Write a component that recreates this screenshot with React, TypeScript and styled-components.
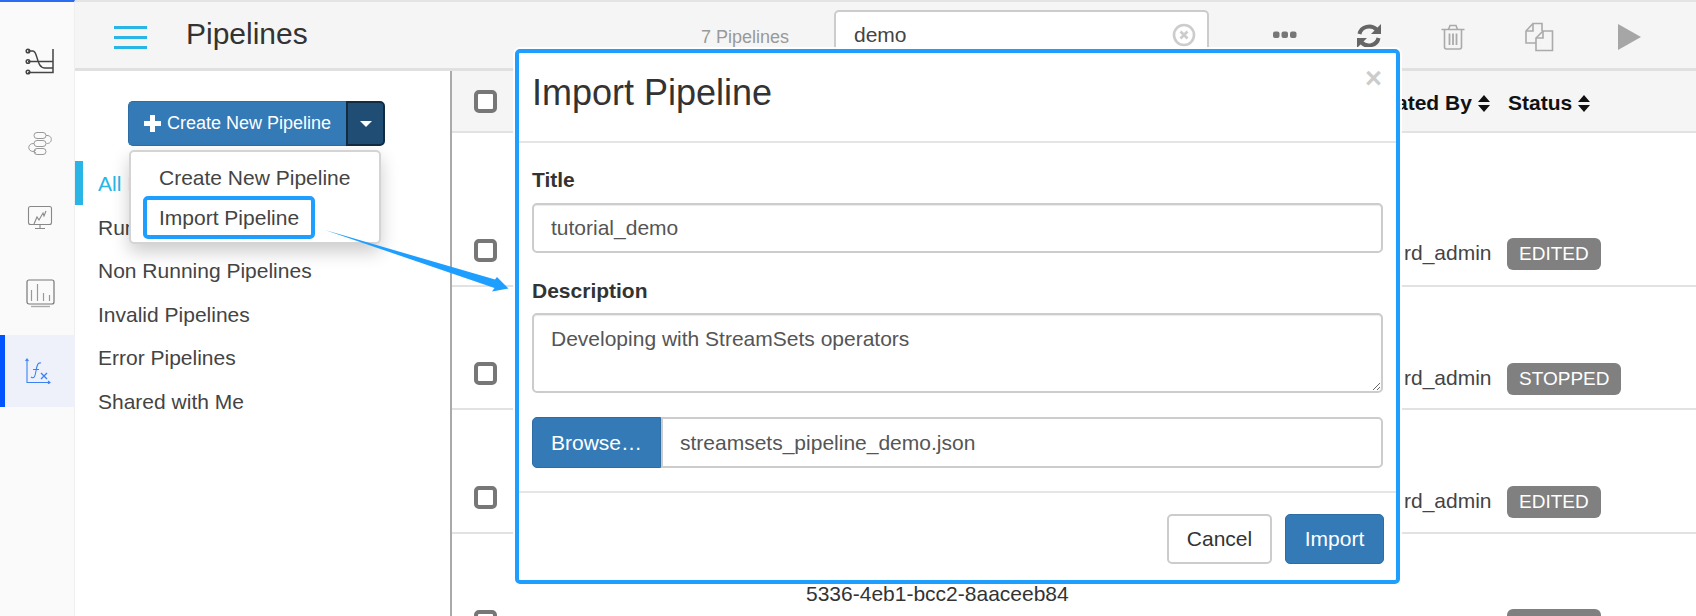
import React from 'react';
import styled, { createGlobalStyle } from 'styled-components';

const GlobalStyle = createGlobalStyle`
  html, body {
    margin: 0;
    padding: 0;
    height: 616px;
    overflow: hidden;
    background: #fff;
    font-family: "Liberation Sans", Arial, sans-serif;
    color: #333;
  }
  * { box-sizing: border-box; }
`;

const annotation = '#1e9fff';

const Page = styled.div`
  position: relative;
  width: 1696px;
  height: 616px;
  overflow: hidden;
  display: flex;
`;

const Rail = styled.nav`
  width: 75px;
  flex: none;
  background: #fafafa;
  border-top: 2px solid #2b6cf0;
  border-right: 1px solid #efefef;
  padding-top: 23px;
`;

const RailItem = styled.div<{ $top?: number; $active?: boolean }>`
  height: 72px;
  margin-top: ${({ $top }) => $top ?? 0}px;
  display: flex;
  align-items: center;
  justify-content: center;
  background: ${({ $active }) => ($active ? '#eef1f9' : 'transparent')};
  border-left: 5px solid ${({ $active }) => ($active ? '#0055ff' : 'transparent')};
  padding-right: ${({ $active }) => ($active ? 5 : 0)}px;
  margin-right: -1px;
`;

const Main = styled.div`
  flex: 1;
  min-width: 0;
  display: flex;
  flex-direction: column;
`;

const Header = styled.header`
  height: 71px;
  flex: none;
  display: flex;
  align-items: center;
  background: #f5f5f5;
  border-top: 2px solid #e4e4e4;
  border-bottom: 3px solid #e0e0e0;
  padding-left: 39px;
`;

const Burger = styled.div`
  width: 33px;
  height: 23px;
  flex: none;
  display: flex;
  flex-direction: column;
  justify-content: space-between;
  margin-top: 4px;

  span {
    display: block;
    height: 3px;
    background: #29b6e6;
  }
`;

const PageTitle = styled.h1`
  margin: 0 0 2px 39px;
  font-size: 30px;
  font-weight: 400;
  color: #333;
`;

const Count = styled.span`
  margin-left: auto;
  margin-top: 4px;
  font-size: 18px;
  color: #999;
`;

const SearchBox = styled.div`
  width: 375px;
  height: 50px;
  margin-left: 45px;
  display: flex;
  align-items: center;
  padding: 0 11px 0 18px;
  background: #fff;
  border: 2px solid #ccc;
  border-radius: 5px;
`;

const SearchInput = styled.input`
  flex: 1;
  min-width: 0;
  border: 0;
  outline: 0;
  padding: 0;
  font: 21px "Liberation Sans", Arial, sans-serif;
  color: #444;
`;

const Tools = styled.div`
  display: flex;
  align-items: center;
  margin-left: 34px;
  margin-right: 17px;
`;

const ToolSlot = styled.div<{ $width?: number; $drop?: number; $nudge?: number }>`
  width: ${({ $width }) => $width ?? 84}px;
  display: flex;
  justify-content: center;
  align-items: center;
  padding-top: ${({ $drop }) => ($drop ?? 0) * 2}px;
  padding-left: ${({ $nudge }) => ($nudge ?? 0) * 2}px;
`;

const Body = styled.div`
  flex: 1;
  min-height: 0;
  display: flex;
`;

const Sidebar = styled.aside`
  width: 377px;
  flex: none;
  border-right: 2px solid #aaa;
  padding-top: 30px;
`;

const SplitButton = styled.div`
  width: 257px;
  height: 45px;
  margin-left: 53px;
  margin-bottom: 15px;
  display: flex;
  color: #fff;
  font-size: 18px;
`;

const MainAction = styled.div`
  flex: 1;
  display: flex;
  align-items: center;
  gap: 6px;
  padding-left: 15px;
  background: #337ab7;
  border: 1px solid #2e6da4;
  border-right: 0;
  border-radius: 5px 0 0 5px;
  white-space: nowrap;
`;

const CaretAction = styled.div`
  width: 39px;
  display: flex;
  align-items: center;
  justify-content: center;
  background: #204d74;
  border: 2px solid #122b40;
  border-radius: 0 5px 5px 0;
`;

const Caret = styled.span`
  width: 0;
  height: 0;
  border-left: 6px solid transparent;
  border-right: 6px solid transparent;
  border-top: 6px solid #fff;
`;

const NavItem = styled.div<{ $active?: boolean }>`
  height: 43.5px;
  display: flex;
  align-items: center;
  padding-top: 3px;
  padding-left: ${({ $active }) => ($active ? 15 : 23)}px;
  font-size: 21px;
  color: ${({ $active }) => ($active ? '#29b6e6' : '#444')};
  border-left: ${({ $active }) => ($active ? '8px solid #29b6e6' : '0')};
`;

const Table = styled.section`
  flex: 1;
  min-width: 0;
`;

const TableHead = styled.div`
  height: 62px;
  display: flex;
  align-items: center;
  background: #f5f5f5;
  border-bottom: 2px solid #e2e2e2;
  padding-left: 22px;
`;

const HeadFill = styled.div`
  flex: 1;
`;

const HeadLabel = styled.div<{ $width: number }>`
  width: ${({ $width }) => $width}px;
  flex: none;
  display: flex;
  align-items: center;
  gap: 6px;
  margin-top: 4px;
  font-size: 21px;
  font-weight: 700;
  color: #111;
  white-space: nowrap;
`;

const TableRow = styled.div<{ $height: number }>`
  height: ${({ $height }) => $height}px;
  display: flex;
  align-items: flex-end;
  padding-left: 22px;
  border-bottom: 2px solid #e2e2e2;
`;

const Check = styled.div<{ $row?: boolean }>`
  width: 23px;
  height: 23px;
  flex: none;
  border: 4px solid #777;
  border-radius: 5px;
  background: #fff;
  margin-bottom: ${({ $row }) => ($row ? 23 : 0)}px;
`;

const NameCell = styled.div`
  flex: 1;
  min-width: 0;
  padding-left: 309px;
  margin-bottom: 50px;
  font-size: 21px;
  color: #333;
  white-space: nowrap;
`;

const OwnerCell = styled.div<{ $drop: number }>`
  width: 103px;
  flex: none;
  margin-bottom: ${({ $drop }) => 20 - $drop}px;
  font-size: 21px;
  color: #444;
`;

const StatusCell = styled.div<{ $drop: number }>`
  width: 189px;
  flex: none;
  margin-bottom: ${({ $drop }) => 15 - $drop}px;
`;

const Badge = styled.span`
  display: inline-flex;
  align-items: center;
  height: 32px;
  padding: 0 12px;
  border-radius: 6px;
  background: #808080;
  color: #fff;
  font-size: 19px;
`;

/* floating things that sit on top of the list */
const Menu = styled.div`
  position: absolute;
  left: 129px;
  top: 150px;
  width: 252px;
  height: 94px;
  padding: 6px 0 0 28px;
  background: #fff;
  border: 2px solid #d4d4d4;
  border-radius: 5px;
  box-shadow: 0 8px 18px rgba(0, 0, 0, 0.2);
  font-size: 21px;
  color: #444;
`;

const MenuItem = styled.div`
  height: 40px;
  display: flex;
  align-items: center;
  white-space: nowrap;
`;

const Highlight = styled.div`
  position: absolute;
  left: 143px;
  top: 196px;
  width: 172px;
  height: 43px;
  border: 4px solid ${annotation};
  border-radius: 5px;
`;

const Arrow = styled.svg`
  position: absolute;
  left: 320px;
  top: 225px;
`;

const Modal = styled.div`
  position: absolute;
  left: 515px;
  top: 49px;
  width: 885px;
  height: 535px;
  background: #fff;
  border: 4px solid ${annotation};
  border-radius: 5px;
  box-shadow: 0 0 0 2px rgba(255, 255, 255, 0.9);
`;

const ModalHead = styled.div`
  position: relative;
  height: 90px;
  padding: 18px 13px 0;
  border-bottom: 2px solid #e5e5e5;
`;

const ModalTitle = styled.h2`
  margin: 0;
  font-size: 36px;
  line-height: 44px;
  font-weight: 400;
  color: #333;
`;

const CloseMark = styled.span`
  position: absolute;
  right: 14px;
  top: 8px;
  font-size: 29px;
  line-height: 34px;
  font-weight: 700;
  color: #ccc;
`;

const ModalBody = styled.div`
  height: 350px;
  padding: 25px 13px 0;
  border-bottom: 2px solid #e5e5e5;
`;

const FieldLabel = styled.label`
  display: block;
  height: 24px;
  line-height: 24px;
  font-size: 21px;
  font-weight: 700;
  color: #333;
`;

const TextField = styled.input`
  display: block;
  width: 100%;
  height: 50px;
  margin: 11px 0 26px;
  padding: 0 17px;
  border: 2px solid #ccc;
  border-radius: 5px;
  outline: 0;
  font: 21px "Liberation Sans", Arial, sans-serif;
  color: #555;
  box-shadow: inset 0 1px 1px rgba(0, 0, 0, 0.08);
`;

const AreaField = styled.textarea`
  display: block;
  width: 100%;
  height: 80px;
  margin: 10px 0 24px;
  padding: 10px 17px;
  border: 2px solid #ccc;
  border-radius: 5px;
  outline: 0;
  resize: vertical;
  font: 21px/28px "Liberation Sans", Arial, sans-serif;
  color: #555;
  box-shadow: inset 0 1px 1px rgba(0, 0, 0, 0.08);
`;

const FileRow = styled.div`
  height: 51px;
  display: flex;
  font-size: 21px;
`;

const BrowseButton = styled.div`
  width: 129px;
  flex: none;
  display: flex;
  align-items: center;
  justify-content: center;
  background: #337ab7;
  border: 1px solid #2e6da4;
  border-radius: 5px 0 0 5px;
  color: #fff;
`;

const FileName = styled.div`
  flex: 1;
  display: flex;
  align-items: center;
  padding-left: 17px;
  border: 2px solid #ccc;
  border-radius: 0 5px 5px 0;
  color: #555;
`;

const ModalFoot = styled.div`
  display: flex;
  justify-content: flex-end;
  gap: 13px;
  padding: 21px 12px 0;
`;

const FootButton = styled.div<{ $primary?: boolean }>`
  height: 50px;
  width: ${({ $primary }) => ($primary ? 99 : 105)}px;
  display: flex;
  align-items: center;
  justify-content: center;
  font-size: 21px;
  border-radius: 5px;
  background: ${({ $primary }) => ($primary ? '#337ab7' : '#fff')};
  border: ${({ $primary }) => ($primary ? '1px solid #2e6da4' : '2px solid #ccc')};
  color: ${({ $primary }) => ($primary ? '#fff' : '#333')};
`;

const FlowIcon = () => (
  <svg width="30" height="28" viewBox="0 0 30 28" fill="none" stroke="#444" strokeWidth="1.5">
    <circle cx="3" cy="4" r="1.8" />
    <circle cx="3" cy="14.5" r="1.8" />
    <circle cx="3" cy="25" r="1.8" />
    <path d="M28 2V25.5H3M3 14.5H28M3 4H8C13 4 11 21 20 21H28" />
  </svg>
);

const LoopIcon = () => (
  <svg width="26" height="26" viewBox="0 0 26 26" fill="none" stroke="#999" strokeWidth="1">
    <rect x="7" y="1.5" width="12" height="6" rx="3" />
    <rect x="7" y="9.5" width="12" height="6" rx="3" />
    <rect x="7" y="17.5" width="12" height="6" rx="3" />
    <path d="M19 4.5C26 3.5 26 13 19.5 12.5M7 12.5C0 12 0 21 7 20.5M9 18.8L7 20.5L9 22" />
  </svg>
);

const MonitorIcon = () => (
  <svg width="26" height="26" viewBox="0 0 26 26" fill="none" stroke="#888" strokeWidth="1.1">
    <rect x="1.5" y="1.5" width="23" height="18" rx="2" />
    <path d="M7 19L10 12L12 15L16 8L17 11L19 6M13 19.5V23M8 23.5H18" />
  </svg>
);

const BarsIcon = () => (
  <svg width="29" height="29" viewBox="0 0 29 29" fill="none" stroke="#777" strokeWidth="1.2">
    <rect x="1" y="1" width="27" height="24" rx="2" />
    <path d="M5.5 22V11M11.5 22V5M17.5 22V14M23.5 22V16" stroke="#999" />
    <path d="M5 27.5H24" stroke="#aaa" strokeWidth="1.4" />
  </svg>
);

const FxIcon = () => (
  <svg width="26" height="26" viewBox="0 0 26 26" fill="none" stroke="#3b82f6" strokeWidth="1.1">
    <path d="M2 1V24.5H25M0.5 3L2 1L3.5 3M23 23L25 24.5L23 26" />
    <path d="M6 19C9 21 10 19 11 13C12 7 13 4 16 5M8 11.5H14" />
    <path d="M16 15L22 21M22 15L16 21" strokeWidth="1.4" />
  </svg>
);

const PlusIcon = () => (
  <svg width="17" height="17" viewBox="0 0 17 17" fill="#fff">
    <path d="M6 0H11V6H17V11H11V17H6V11H0V6H6Z" />
  </svg>
);

const ClearIcon = () => (
  <svg width="24" height="24" viewBox="0 0 24 24" fill="none" stroke="#ccc">
    <circle cx="12" cy="12" r="10" strokeWidth="2.6" />
    <path d="M8.5 8.5L15.5 15.5M15.5 8.5L8.5 15.5" strokeWidth="2.8" />
  </svg>
);

const DotsIcon = () => (
  <svg width="24" height="8" viewBox="0 0 24 8" fill="#777">
    <rect x="0" y="0.5" width="6.5" height="6.5" rx="2" />
    <rect x="8.5" y="0.5" width="6.5" height="6.5" rx="2" />
    <rect x="17" y="0.5" width="6.5" height="6.5" rx="2" />
  </svg>
);

const RefreshIcon = () => (
  <svg width="26" height="26" viewBox="0 0 26 26" fill="none">
    <path d="M3.5 11C5 3.5 15 1 20.5 6.5" stroke="#666" strokeWidth="4" />
    <path d="M25 1V11H15Z" fill="#666" />
    <path d="M22.5 15C21 22.5 11 25 5.5 19.5" stroke="#666" strokeWidth="4" />
    <path d="M1 25V15H11Z" fill="#666" />
  </svg>
);

const TrashIcon = () => (
  <svg width="24" height="26" viewBox="0 0 24 26" fill="none" stroke="#aaa" strokeWidth="1.6">
    <path d="M0.5 5.5H23.5M3.5 5.5V23C3.5 24.5 4.5 25 5.5 25H18.5C19.5 25 20.5 24.5 20.5 23V5.5" />
    <path d="M7.5 5.5L9 1.5H15L16.5 5.5" />
    <path d="M8.5 9.5V21M12 9.5V21M15.5 9.5V21" strokeWidth="1.8" />
  </svg>
);

const CopyIcon = () => (
  <svg width="30" height="30" viewBox="0 0 30 30" fill="none" stroke="#aaa" strokeWidth="1.6">
    <path d="M12 21H2V9L9 1.5H18V9" />
    <path d="M9 1.5V9H2" />
    <path d="M12 28.5V16L19 9H28.5V28.5Z" />
    <path d="M19 9V16H12" />
  </svg>
);

const PlayIcon = () => (
  <svg width="23" height="26" viewBox="0 0 23 26" fill="#a6a6a6">
    <path d="M0 0L23 13L0 26Z" />
  </svg>
);

const SortIcon = () => (
  <svg width="12" height="17" viewBox="0 0 12 17" fill="#111">
    <path d="M6 0L12 7H0ZM0 10H12L6 17Z" />
  </svg>
);

const navItems = ['Running Pipelines', 'Non Running Pipelines', 'Invalid Pipelines', 'Error Pipelines', 'Shared with Me'];

const rows = [
  { height: 154, drop: 0, status: 'EDITED' },
  { height: 123, drop: 2, status: 'STOPPED' },
  { height: 124, drop: 1, status: 'EDITED' },
  { height: 124, drop: 0, status: 'EDITED', uuid: '5336-4eb1-bcc2-8aaceeb84' },
];

const App: React.FC = () => {
  return (
    <Page>
      <GlobalStyle />
      <Rail>
        <RailItem><FlowIcon /></RailItem>
        <RailItem $top={11}><LoopIcon /></RailItem>
        <RailItem $top={2}><MonitorIcon /></RailItem>
        <RailItem $top={3}><BarsIcon /></RailItem>
        <RailItem $top={6} $active><FxIcon /></RailItem>
      </Rail>
      <Main>
        <Header>
          <Burger><span /><span /><span /></Burger>
          <PageTitle>Pipelines</PageTitle>
          <Count>7 Pipelines</Count>
          <SearchBox>
            <SearchInput readOnly value="demo" />
            <ClearIcon />
          </SearchBox>
          <Tools>
            <ToolSlot><DotsIcon /></ToolSlot>
            <ToolSlot $drop={1}><RefreshIcon /></ToolSlot>
            <ToolSlot $drop={1.5}><TrashIcon /></ToolSlot>
            <ToolSlot $drop={1.5} $nudge={2}><CopyIcon /></ToolSlot>
            <ToolSlot $width={100} $drop={2}><PlayIcon /></ToolSlot>
          </Tools>
        </Header>
        <Body>
          <Sidebar>
            <SplitButton>
              <MainAction><PlusIcon />Create New Pipeline</MainAction>
              <CaretAction><Caret /></CaretAction>
            </SplitButton>
            <NavItem $active>All Pipelines</NavItem>
            {navItems.map(item => (
              <NavItem key={item}>{item}</NavItem>
            ))}
          </Sidebar>
          <Table>
            <TableHead>
              <Check />
              <HeadFill />
              <HeadLabel $width={147}>Created By<SortIcon /></HeadLabel>
              <HeadLabel $width={188}>Status<SortIcon /></HeadLabel>
            </TableHead>
            {rows.map((row, i) => (
              <TableRow key={i} $height={row.height}>
                <Check $row />
                <NameCell>{row.uuid}</NameCell>
                <OwnerCell $drop={row.drop}>rd_admin</OwnerCell>
                <StatusCell $drop={row.drop}><Badge>{row.status}</Badge></StatusCell>
              </TableRow>
            ))}
          </Table>
        </Body>
      </Main>

      <Menu>
        <MenuItem>Create New Pipeline</MenuItem>
        <MenuItem>Import Pipeline</MenuItem>
      </Menu>
      <Highlight />
      <Arrow width="190" height="70" viewBox="0 0 190 70">
        <path d="M5 5L175 54.5L177 52L188.5 63.5L172 66.5L174.5 63Z" fill={annotation} />
      </Arrow>

      <Modal>
        <ModalHead>
          <ModalTitle>Import Pipeline</ModalTitle>
          <CloseMark>×</CloseMark>
        </ModalHead>
        <ModalBody>
          <FieldLabel>Title</FieldLabel>
          <TextField readOnly value="tutorial_demo" />
          <FieldLabel>Description</FieldLabel>
          <AreaField readOnly value="Developing with StreamSets operators" />
          <FileRow>
            <BrowseButton>Browse…</BrowseButton>
            <FileName>streamsets_pipeline_demo.json</FileName>
          </FileRow>
        </ModalBody>
        <ModalFoot>
          <FootButton>Cancel</FootButton>
          <FootButton $primary>Import</FootButton>
        </ModalFoot>
      </Modal>
    </Page>
  );
};

export default App;
